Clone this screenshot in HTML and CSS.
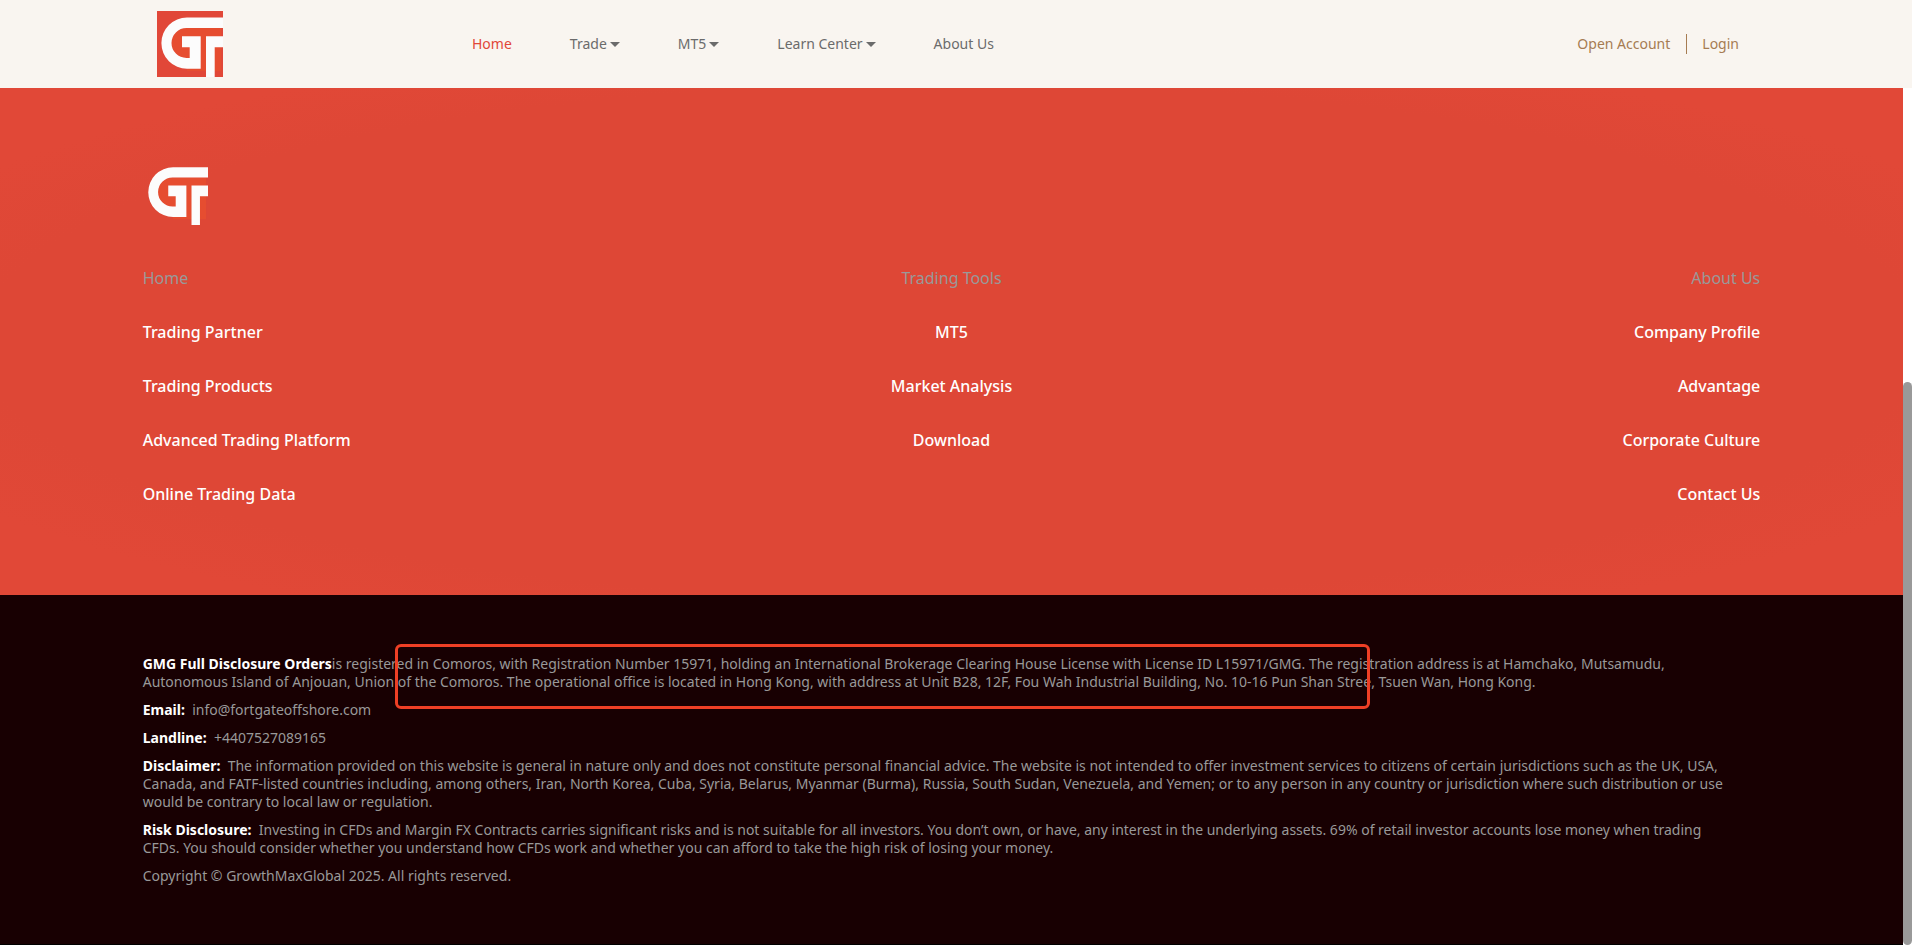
FILE: index.html
```html
<!DOCTYPE html>
<html lang="en">
<head>
<meta charset="UTF-8">
<meta name="viewport" content="width=device-width, initial-scale=1.0">
<title>GrowthMaxGlobal</title>
<link rel="stylesheet" href="styles.css">
</head>
<body>
<svg width="0" height="0" class="sprite" aria-hidden="true">
  <symbol id="gt" viewBox="0 0 66 66">
    <path d="M64 17H29.500A15 15 0 0 0 29.500 47L30 60H64V17Z" fill="#e64d30"/>
    <path d="M66 6.500H30A25.600 25.600 0 0 0 30 57.700H43.700V25.300H25V36.300H32.700V47H29.500A15 15 0 0 1 29.500 17H66Z" fill="#fcfcfc"/>
    <path d="M49 25.300H66V36.300H57.700V66H49Z" fill="#fcfcfc"/>
  </symbol>
</svg>
<header class="header">
  <a class="logo" href="#" aria-label="GrowthMaxGlobal"><svg><use href="#gt"/></svg></a>
  <nav class="nav">
    <a class="active" href="#">Home</a>
    <a class="drop" href="#">Trade</a>
    <a class="drop" href="#">MT5</a>
    <a class="drop" href="#">Learn Center</a>
    <a href="#">About Us</a>
  </nav>
  <div class="account">
    <a href="#">Open Account</a>
    <a class="login" href="#">Login</a>
  </div>
</header>
<div class="page">
  <footer class="footer">
    <section class="footer-top">
      <svg class="footer-logo"><use href="#gt"/></svg>
      <div class="columns">
        <ul>
          <li class="title">Home</li>
          <li><a href="#">Trading Partner</a></li>
          <li><a href="#">Trading Products</a></li>
          <li><a href="#">Advanced Trading Platform</a></li>
          <li><a href="#">Online Trading Data</a></li>
        </ul>
        <ul class="center">
          <li class="title">Trading Tools</li>
          <li><a href="#">MT5</a></li>
          <li><a href="#">Market Analysis</a></li>
          <li><a href="#">Download</a></li>
        </ul>
        <ul class="right">
          <li class="title">About Us</li>
          <li><a href="#">Company Profile</a></li>
          <li><a href="#">Advantage</a></li>
          <li><a href="#">Corporate Culture</a></li>
          <li><a href="#">Contact Us</a></li>
        </ul>
      </div>
    </section>
    <section class="legal">
      <p><b>GMG Full Disclosure Orders</b>is registered in Comoros, with Registration Number 15971, holding an International Brokerage Clearing House License with License ID L15971/GMG. The registration address is at Hamchako, Mutsamudu,<br>Autonomous Island of Anjouan, Union of the Comoros. The operational office is located in Hong Kong, with address at Unit B28, 12F, Fou Wah Industrial Building, No. 10-16 Pun Shan Stree, Tsuen Wan, Hong Kong.</p>
      <p><b>Email:</b>&nbsp; info@fortgateoffshore.com</p>
      <p><b>Landline:</b>&nbsp; +4407527089165</p>
      <p><b>Disclaimer:</b>&nbsp; The information provided on this website is general in nature only and does not constitute personal financial advice. The website is not intended to offer investment services to citizens of certain jurisdictions such as the UK, USA,<br>Canada, and FATF-listed countries including, among others, Iran, North Korea, Cuba, Syria, Belarus, Myanmar (Burma), Russia, South Sudan, Venezuela, and Yemen; or to any person in any country or jurisdiction where such distribution or use<br>would be contrary to local law or regulation.</p>
      <p><b>Risk Disclosure:</b>&nbsp; Investing in CFDs and Margin FX Contracts carries significant risks and is not suitable for all investors. You don’t own, or have, any interest in the underlying assets. 69% of retail investor accounts lose money when trading<br>CFDs. You should consider whether you understand how CFDs work and whether you can afford to take the high risk of losing your money.</p>
      <p>Copyright © GrowthMaxGlobal 2025. All rights reserved.</p>
      <div class="highlight"></div>
    </section>
  </footer>
  <div class="scrollbar"><div class="thumb"></div></div>
</div>
</body>
</html>
```
FILE: styles.css
```css
* {
  padding: 0;
  margin: 0;
  box-sizing: border-box;
}
body {
  font-family: "Noto Sans", "Open Sans", sans-serif;
  font-size: 14px;
  line-height: 18px;
  min-height: 100vh;
  display: flex;
  flex-direction: column;
  background-color: #fff;
}
a {
  color: inherit;
  text-decoration: none;
}
ul {
  list-style: none;
}
.sprite {
  position: absolute;
}
.header {
  display: flex;
  align-items: center;
  height: 88px;
  padding: 0 173px 0 157px;
  background-color: #f9f5f0;
}
.logo {
  width: 66px;
  height: 66px;
  margin-right: 249px;
  background-color: #e14738;
}
.logo svg {
  display: block;
  width: 100%;
  height: 100%;
}
.nav {
  display: flex;
  gap: 58px;
  color: #6b6b6b;
}
.nav .active {
  color: #e14738;
}
.drop {
  display: flex;
  align-items: center;
  gap: 3px;
}
.drop::after {
  content: "";
  border: 5px solid transparent;
  border-top-color: #6b6b6b;
  border-bottom: 0;
}
.account {
  display: flex;
  align-items: center;
  gap: 16px;
  margin-left: auto;
  line-height: 20px;
  color: #a67c52;
}
.login {
  padding-left: 15px;
  border-left: 1px solid #a67c52;
}
.page {
  flex: 1;
  display: flex;
}
.footer {
  flex: 1;
  display: flex;
  flex-direction: column;
}
.footer-top {
  padding: 73px 7.5% 74px;
  background: radial-gradient(ellipse, #de4736 72%, #e14837 86%);
}
.footer-logo {
  display: block;
  width: 66px;
  height: 64px;
  margin-bottom: 26px;
}
.columns {
  display: flex;
  justify-content: space-between;
}
.columns ul {
  flex: 1;
}
.columns li {
  font-size: 16px;
  line-height: 54px;
  font-weight: 500;
  color: #fff;
}
.columns .title {
  font-weight: 400;
  color: #999;
}
.center {
  text-align: center;
}
.right {
  text-align: right;
}
.legal {
  position: relative;
  flex: 1;
  padding: 60px 7.5% 59px;
  background-color: #180002;
  border-bottom: 1px solid #000;
  color: #999;
}
.legal p + p {
  margin-top: 10px;
}
.legal b {
  color: #fff;
}
/* outline over the registration details */
.highlight {
  position: absolute;
  top: 49px;
  left: 395px;
  width: 975px;
  height: 65px;
  border: 3px solid #ee3f25;
  border-radius: 6px;
}
.scrollbar {
  display: flex;
  width: 9px;
  padding-top: 294px;
}
.thumb {
  flex: 1;
  border-radius: 5px;
  background-color: #999;
}
```
